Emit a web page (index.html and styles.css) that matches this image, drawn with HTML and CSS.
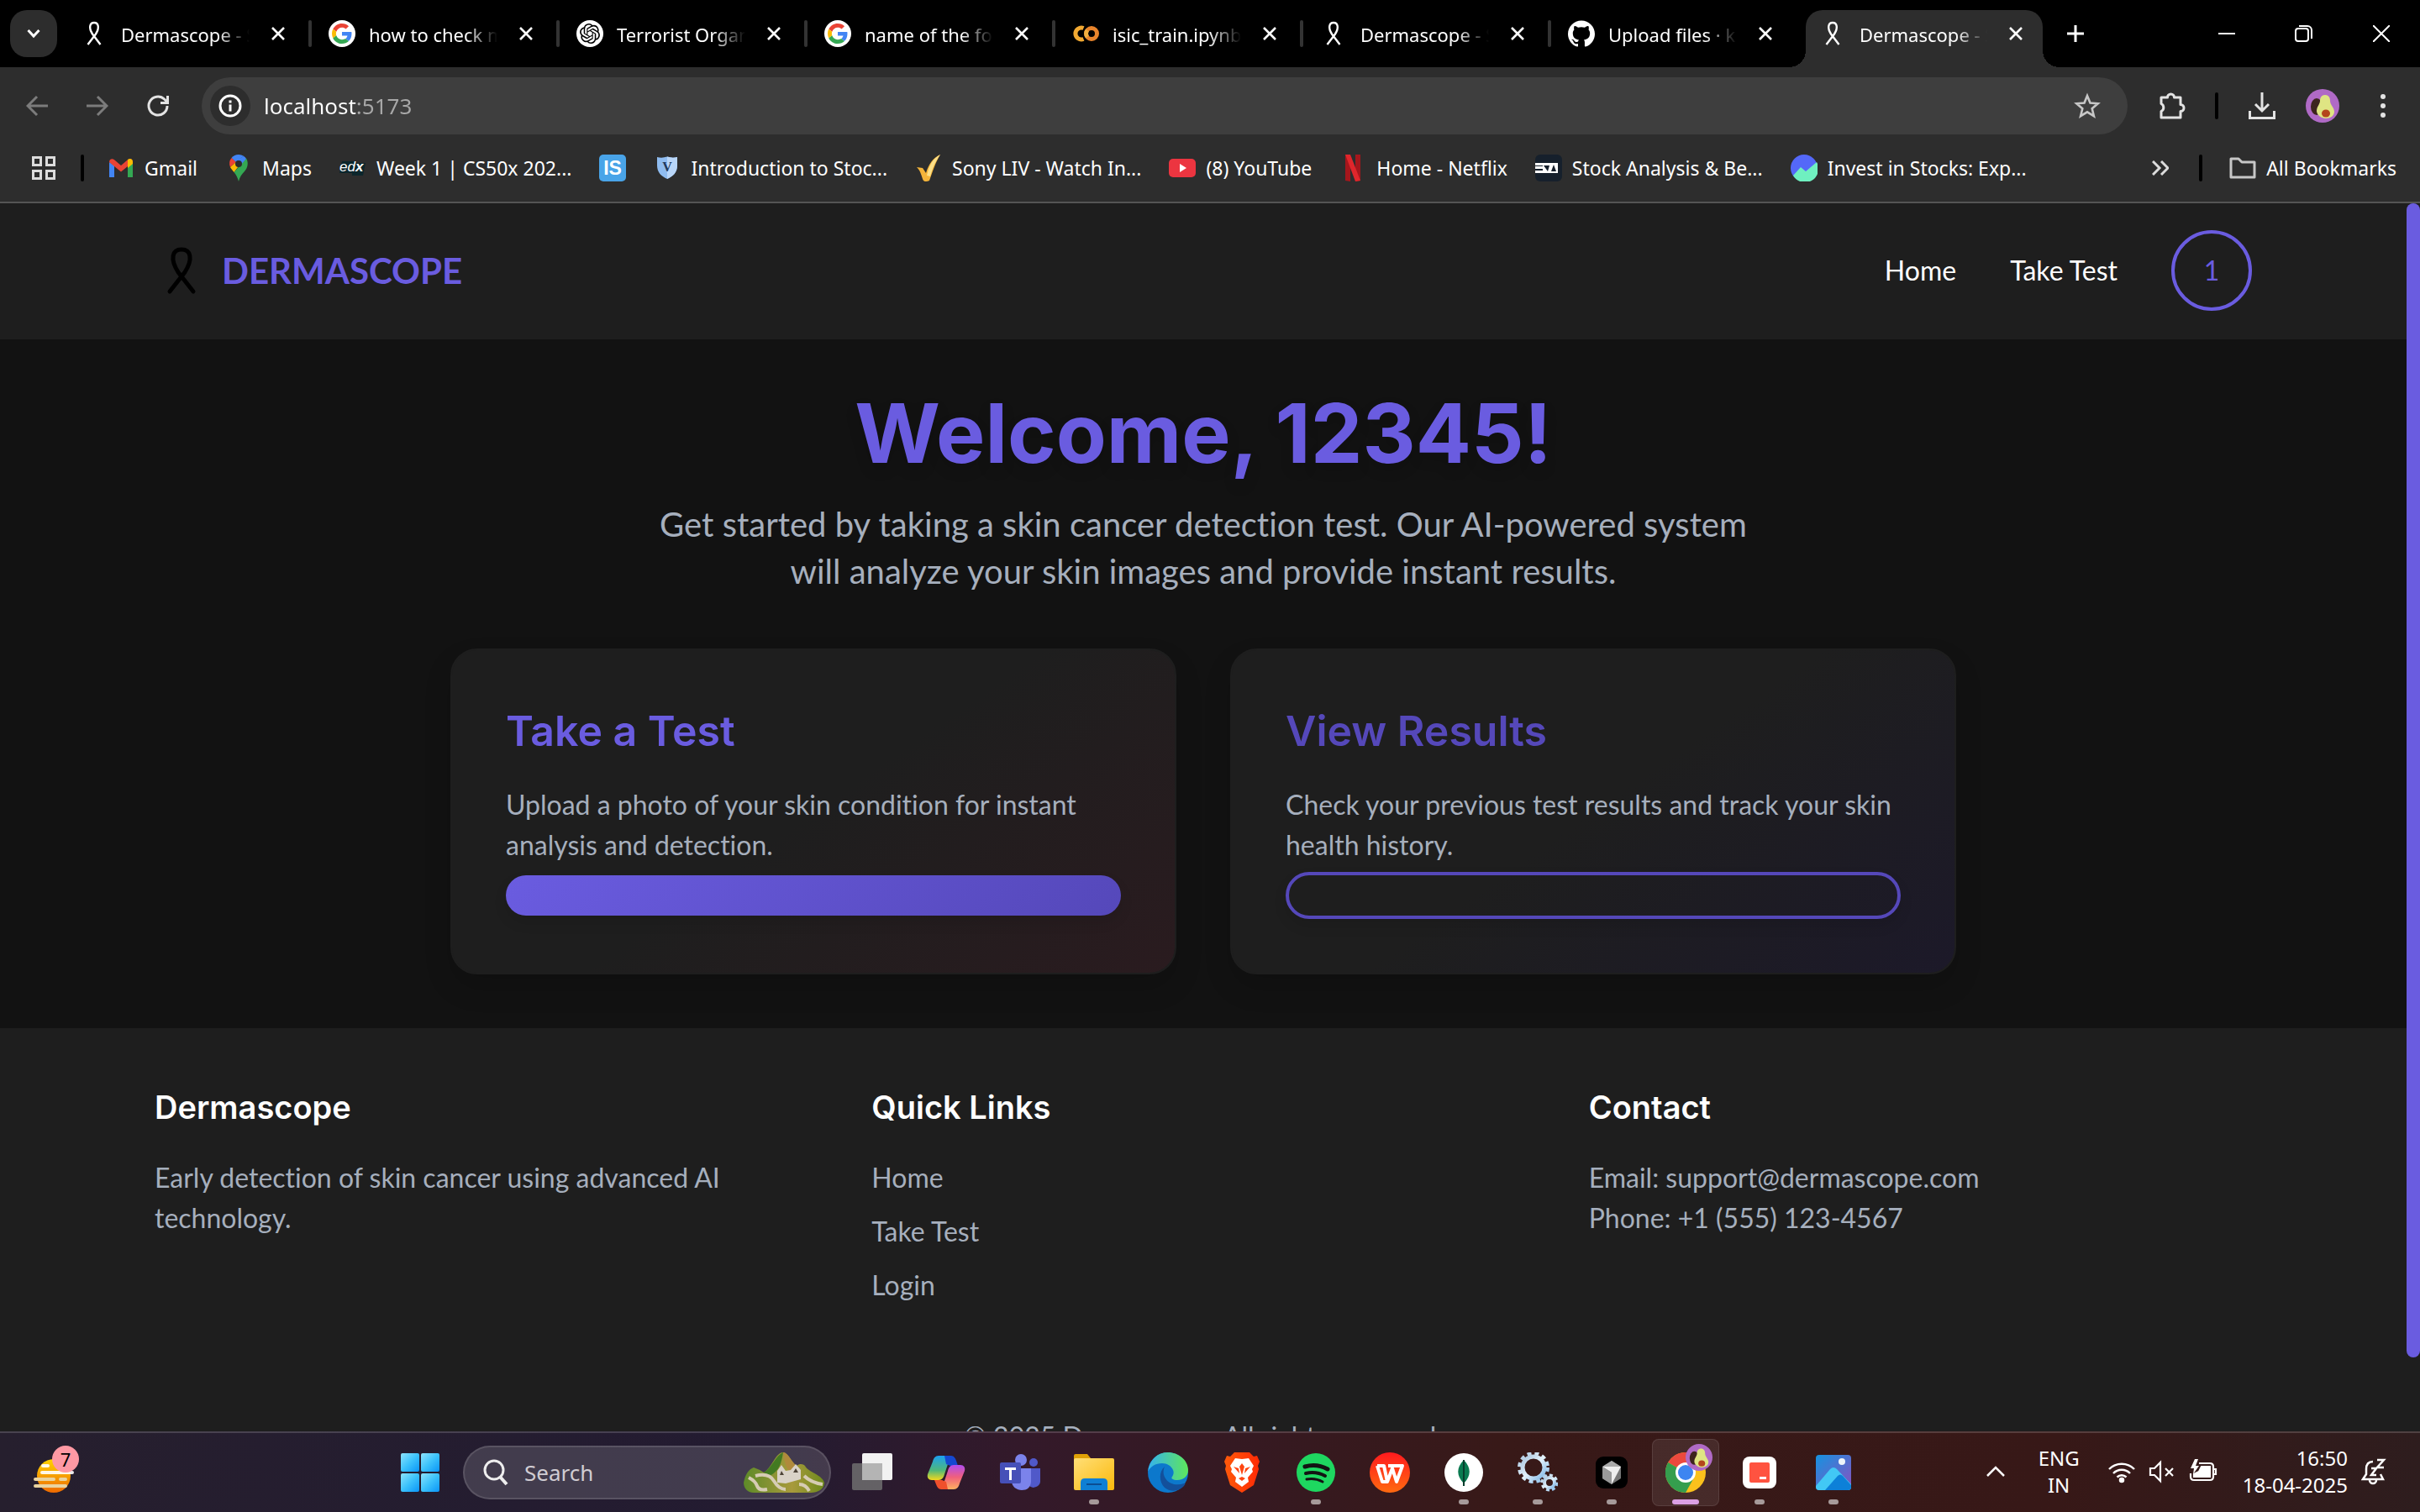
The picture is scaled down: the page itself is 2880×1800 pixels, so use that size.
FILE: index.html
```html
<!DOCTYPE html>
<html lang="en">
<head>
<meta charset="utf-8">
<title>Dermascope - Skin Cancer Detection</title>
<link rel="stylesheet" href="styles.css">
</head>
<body>
<svg class="defs" aria-hidden="true">
  <defs>
    <symbol id="ribbon" viewBox="0 0 28 32"><path d="M6.500 29 L16 16.500 C20.500 9.500 19.500 3 14 3 C8.500 3 7.500 9.500 12 16.500 L21.500 29" fill="none" stroke="currentColor" stroke-width="2.400"/></symbol>
    <symbol id="close" viewBox="0 0 16 16"><path d="M1 1 L15 15 M15 1 L1 15" fill="none" stroke="currentColor" stroke-width="2.600"/></symbol>
    <symbol id="google" viewBox="0 0 64 64"><circle cx="32" cy="32" r="32" fill="#fff"/><g transform="translate(8 8)"><path fill="#EA4335" d="M24 9.500c3.540 0 6.710 1.220 9.210 3.600l6.850-6.850C35.900 2.380 30.470 0 24 0 14.620 0 6.510 5.380 2.560 13.220l7.980 6.190C12.430 13.720 17.740 9.500 24 9.500z"/><path fill="#4285F4" d="M46.980 24.550c0-1.570-.15-3.090-.38-4.550H24v9.020h12.940c-.58 2.960-2.260 5.480-4.780 7.180l7.730 6c4.510-4.180 7.090-10.360 7.090-17.650z"/><path fill="#FBBC05" d="M10.530 28.590c-.48-1.450-.76-2.990-.76-4.590s.27-3.140.76-4.590l-7.980-6.190C.92 16.460 0 20.120 0 24c0 3.880.92 7.540 2.560 10.780l7.970-6.190z"/><path fill="#34A853" d="M24 48c6.480 0 11.930-2.130 15.890-5.810l-7.730-6c-2.150 1.450-4.920 2.300-8.160 2.300-6.260 0-11.570-4.220-13.470-9.910l-7.980 6.190C6.510 42.620 14.620 48 24 48z"/></g></symbol>
    <symbol id="avatar" viewBox="0 0 40 40"><circle cx="20" cy="20" r="20" fill="#b06ac6"/><ellipse cx="13" cy="21" rx="7" ry="10" fill="#3d241e"/><path d="M23 7c4 0 6 3 6 7 0 5 5 8 5 13 0 5-5 8-10 8s-11-4-11-9c0-5 4-8 4-12 0-4 2-7 6-7z" fill="#dfe583"/><ellipse cx="24" cy="29" rx="5" ry="4.500" fill="#b4461c"/></symbol>
    <linearGradient id="gWin" x1="0" y1="0" x2="1" y2="1"><stop offset="0" stop-color="#8de3fd"/><stop offset=".5" stop-color="#3cc2fb"/><stop offset="1" stop-color="#0a95f7"/></linearGradient>
    <linearGradient id="gSun" x1="0" y1="0" x2="0" y2="1"><stop offset="0" stop-color="#ffd400"/><stop offset="1" stop-color="#ee6a00"/></linearGradient>
    <linearGradient id="gCop1" x1="0" y1="0" x2="0" y2="1"><stop offset="0" stop-color="#1ca0f0"/><stop offset=".6" stop-color="#4fb87a"/><stop offset="1" stop-color="#f4d81c"/></linearGradient>
    <linearGradient id="gCop2" x1="0" y1="0" x2="0" y2="1"><stop offset="0" stop-color="#b04cf0"/><stop offset=".5" stop-color="#f0607c"/><stop offset="1" stop-color="#ffb060"/></linearGradient>
    <linearGradient id="gFold" x1="0" y1="0" x2="1" y2="1"><stop offset="0" stop-color="#ffdf77"/><stop offset="1" stop-color="#fbb90c"/></linearGradient>
    <linearGradient id="gEdge" x1="0" y1="0" x2="1" y2="0"><stop offset="0" stop-color="#35b2ee"/><stop offset="1" stop-color="#5ee65c"/></linearGradient>
    <linearGradient id="gBrave" x1="0" y1="0" x2="1" y2="0"><stop offset="0" stop-color="#ff5a0a"/><stop offset="1" stop-color="#ff2a05"/></linearGradient>
    <linearGradient id="gWps" x1="0" y1="0" x2="0" y2="1"><stop offset="0" stop-color="#ff1a1e"/><stop offset="1" stop-color="#ff6a10"/></linearGradient>
    <linearGradient id="gPho" x1="0" y1="0" x2="1" y2="1"><stop offset="0" stop-color="#1593e0"/><stop offset="1" stop-color="#8a50c0"/></linearGradient>
    <linearGradient id="gHill" x1="0" y1="0" x2="1" y2="0"><stop offset="0" stop-color="#5d8a28"/><stop offset=".6" stop-color="#a89a3c"/><stop offset="1" stop-color="#6d8a1c"/></linearGradient>
    <linearGradient id="gGear" x1="0" y1="0" x2="1" y2="1"><stop offset="0" stop-color="#a9c4de"/><stop offset=".5" stop-color="#e3f2fc"/><stop offset="1" stop-color="#7fb6e6"/></linearGradient>
  </defs>
</svg>

<header class="browser">
  <div class="tabstrip">
    <button class="tab-search" aria-label="Search tabs"><svg width="16" height="12" viewBox="0 0 16 12"><path d="M1.500 2 L8 9 L14.500 2" fill="none" stroke="#fff" stroke-width="3"/></svg></button>
    <div class="tabs">
      <div class="tab"><svg class="fav"><use href="#ribbon"/></svg><span class="tab-title">Dermascope - Skin</span><button class="tab-close" aria-label="Close tab"><svg><use href="#close"/></svg></button></div>
      <div class="tab"><svg class="fav"><use href="#google"/></svg><span class="tab-title">how to check my</span><button class="tab-close" aria-label="Close tab"><svg><use href="#close"/></svg></button></div>
      <div class="tab"><svg class="fav" viewBox="0 0 32 32"><circle cx="16" cy="16" r="16" fill="#fff"/><g transform="translate(4 4)"><path fill="#000" d="M22.282 9.821a5.985 5.985 0 0 0-.516-4.911 6.046 6.046 0 0 0-6.510-2.900A6.065 6.065 0 0 0 4.981 4.182a5.985 5.985 0 0 0-3.998 2.900 6.046 6.046 0 0 0 .743 7.097 5.980 5.980 0 0 0 .511 4.911 6.051 6.051 0 0 0 6.515 2.900A5.985 5.985 0 0 0 13.260 24a6.056 6.056 0 0 0 5.772-4.206 5.989 5.989 0 0 0 3.998-2.900 6.056 6.056 0 0 0-.748-7.073zm-9.022 12.608a4.476 4.476 0 0 1-2.876-1.041l.142-.080 4.778-2.758a.795.795 0 0 0 .393-.681v-6.737l2.020 1.169a.071.071 0 0 1 .038.052v5.583a4.504 4.504 0 0 1-4.495 4.494zm-9.661-4.125a4.471 4.471 0 0 1-.535-3.014l.142.085 4.783 2.758a.771.771 0 0 0 .781 0l5.843-3.369v2.332a.080.080 0 0 1-.033.062L9.740 19.950a4.499 4.499 0 0 1-6.141-1.646zM2.341 7.896a4.485 4.485 0 0 1 2.366-1.973V11.600a.766.766 0 0 0 .388.677l5.814 3.354-2.020 1.169a.076.076 0 0 1-.071 0l-4.830-2.787A4.504 4.504 0 0 1 2.341 7.872zm16.596 3.856L13.104 8.364 15.119 7.200a.076.076 0 0 1 .071 0l4.830 2.791a4.494 4.494 0 0 1-.677 8.104v-5.677a.790.790 0 0 0-.407-.667zm2.011-3.023l-.142-.085-4.774-2.782a.776.776 0 0 0-.785 0L9.409 9.230V6.897a.066.066 0 0 1 .028-.062l4.830-2.787a4.499 4.499 0 0 1 6.680 4.660zM8.307 12.863l-2.020-1.164a.080.080 0 0 1-.038-.057V6.074a4.499 4.499 0 0 1 7.376-3.454l-.142.081L8.704 5.459a.795.795 0 0 0-.393.681zm1.098-2.365l2.602-1.500 2.607 1.500v2.999l-2.597 1.500-2.607-1.500Z"/></g></svg><span class="tab-title">Terrorist Organis</span><button class="tab-close" aria-label="Close tab"><svg><use href="#close"/></svg></button></div>
      <div class="tab"><svg class="fav"><use href="#google"/></svg><span class="tab-title">name of the four</span><button class="tab-close" aria-label="Close tab"><svg><use href="#close"/></svg></button></div>
      <div class="tab"><svg class="fav" viewBox="0 0 32 32" fill="none" stroke-width="5"><path d="M13.500 9.500A7 7 0 1 0 13.500 22.500" stroke="#f2a932"/><circle cx="23" cy="16" r="6.500" stroke="#e8842c"/><path d="M18 12a6.500 6.500 0 0 0 0 8" stroke="#f2b040"/></svg><span class="tab-title">isic_train.ipynb -</span><button class="tab-close" aria-label="Close tab"><svg><use href="#close"/></svg></button></div>
      <div class="tab"><svg class="fav"><use href="#ribbon"/></svg><span class="tab-title">Dermascope - Skin</span><button class="tab-close" aria-label="Close tab"><svg><use href="#close"/></svg></button></div>
      <div class="tab before-active"><svg class="fav" viewBox="0 0 24 24"><path fill="#fff" d="M12 .297c-6.630 0-12 5.373-12 12 0 5.303 3.438 9.800 8.205 11.385.6.113.82-.258.82-.577 0-.285-.01-1.040-.015-2.040-3.338.724-4.042-1.610-4.042-1.610C4.422 18.070 3.633 17.700 3.633 17.700c-1.087-.744.084-.729.084-.729 1.205.084 1.838 1.236 1.838 1.236 1.070 1.835 2.809 1.305 3.495.998.108-.776.417-1.305.76-1.605-2.665-.3-5.466-1.332-5.466-5.930 0-1.310.465-2.380 1.235-3.220-.135-.303-.54-1.523.105-3.176 0 0 1.005-.322 3.300 1.230.96-.267 1.980-.399 3-.405 1.020.006 2.040.138 3 .405 2.280-1.552 3.285-1.230 3.285-1.230.645 1.653.24 2.873.12 3.176.765.84 1.230 1.910 1.230 3.220 0 4.610-2.805 5.625-5.475 5.920.42.36.81 1.096.81 2.220 0 1.606-.015 2.896-.015 3.286 0 .315.21.69.825.57C20.565 22.092 24 17.592 24 12.297c0-6.627-5.373-12-12-12"/></svg><span class="tab-title">Upload files · kr</span><button class="tab-close" aria-label="Close tab"><svg><use href="#close"/></svg></button></div>
      <div class="tab active"><svg class="fav"><use href="#ribbon"/></svg><span class="tab-title">Dermascope - Skin</span><button class="tab-close" aria-label="Close tab"><svg><use href="#close"/></svg></button></div>
      <button class="new-tab" aria-label="New tab"><svg width="22" height="22" viewBox="0 0 22 22"><path d="M11 1v20M1 11h20" stroke="#fff" stroke-width="3"/></svg></button>
    </div>
    <div class="window-controls">
      <button aria-label="Minimize"><svg width="20" height="20" viewBox="0 0 20 20"><path d="M0 10h20" stroke="#fff" stroke-width="2"/></svg></button>
      <button aria-label="Restore"><svg width="22" height="22" viewBox="0 0 22 22" fill="none" stroke="#fff" stroke-width="2"><rect x="1" y="5" width="15" height="15" rx="3"/><path d="M5 2h10a5 5 0 0 1 5 5v10"/></svg></button>
      <button aria-label="Close window"><svg width="20" height="20" viewBox="0 0 20 20"><path d="M0 0L20 20M20 0L0 20" stroke="#fff" stroke-width="2"/></svg></button>
    </div>
  </div>

  <div class="toolbar">
    <button class="tool" aria-label="Back"><svg width="26" height="26" viewBox="0 0 26 26" fill="none" stroke="#7c7c7c" stroke-width="3"><path d="M26 13H3M13 2L2 13l11 11"/></svg></button>
    <button class="tool" aria-label="Forward"><svg width="26" height="26" viewBox="0 0 26 26" fill="none" stroke="#7c7c7c" stroke-width="3"><path d="M0 13h23M13 2l11 11-11 11"/></svg></button>
    <button class="tool" aria-label="Reload"><svg width="28" height="28" viewBox="0 0 28 28" fill="none" stroke="#e3e3e3" stroke-width="3"><path d="M25 14a11 11 0 1 1-3.500-8L25 9.500M25.500 2v8.500H17"/></svg></button>
    <div class="omnibox">
      <button class="site-info" aria-label="View site information"><svg width="28" height="28" viewBox="0 0 28 28"><circle cx="14" cy="14" r="12" fill="none" stroke="#fff" stroke-width="3"/><path d="M14 12.500v8M14 7.500v3" stroke="#fff" stroke-width="3"/></svg></button>
      <input class="url" type="text" value="localhost:5173" aria-label="Address">
      <button class="tool" aria-label="Bookmark this tab"><svg width="32" height="32" viewBox="0 0 32 32"><path d="M16 4l3.500 8.500 9.200.7-7 6 2.200 9L16 23.300 8.100 28.200l2.200-9-7-6 9.200-.7z" fill="none" stroke="#c7c7c7" stroke-width="2.600"/></svg></button>
    </div>
    <button class="tool" aria-label="Extensions"><svg width="34" height="34" viewBox="0 0 34 34"><path d="M5 7h7.500a4 4 0 0 1 8 0H28v8.500a4 4 0 0 1 0 8V31H5v-7.500a5 5 0 0 0 0-9z" fill="none" stroke="#e3e3e3" stroke-width="3" stroke-linejoin="round"/></svg></button>
    <span class="divider"></span>
    <button class="tool" aria-label="Downloads"><svg width="32" height="32" viewBox="0 0 32 32" fill="none" stroke="#e3e3e3" stroke-width="3"><path d="M16 0v22M8 14l8 8 8-8M1.500 22v8.500h29V22"/></svg></button>
    <button class="tool" aria-label="Profile"><svg width="40" height="40"><use href="#avatar"/></svg></button>
    <button class="tool" aria-label="Browser menu"><svg width="8" height="28" viewBox="0 0 8 28" fill="#e3e3e3"><circle cx="4" cy="3" r="3"/><circle cx="4" cy="14" r="3"/><circle cx="4" cy="25" r="3"/></svg></button>
  </div>

  <nav class="bookmarks" aria-label="Bookmarks">
    <button class="apps" aria-label="Apps"><svg width="28" height="28" viewBox="0 0 28 28" fill="none" stroke="#dcdcdc" stroke-width="3"><rect x="1.500" y="1.500" width="9" height="9"/><rect x="17.500" y="1.500" width="9" height="9"/><rect x="1.500" y="17.500" width="9" height="9"/><rect x="17.500" y="17.500" width="9" height="9"/></svg></button>
    <span class="divider"></span>
    <a class="bm" href="#"><svg width="32" height="32" viewBox="0 0 32 32"><path d="M2 27V9l6 4v14z" fill="#4285f4"/><path d="M24 27V13l6-4v18z" fill="#34a853"/><path d="M2 9c0-4 4-5 7-2l7 6 7-6c3-3 7-2 7 2l-6 5-8 6.500L8 14z" fill="#ea4335"/><path d="M24 6c3-2 6-1 6 3v2l-6 5z" fill="#fbbc04"/></svg>Gmail</a>
    <a class="bm" href="#"><svg width="32" height="32" viewBox="0 0 32 32"><path d="M16 0a11 11 0 0 0-8.500 4l5 5L22 1.800A11 11 0 0 0 16 0z" fill="#4285f4"/><path d="M7.500 4A11 11 0 0 0 6 15l7-6z" fill="#ea4335"/><path d="M6 15c1 2 3 4 4.500 6L24 3.500 13 9z" fill="#fbbc04"/><path d="M10.500 21c3 4 4.500 7 5.500 11 1-5 4-9 7-12 4-4 5-11 2-15.500z" fill="#34a853"/><path d="M22 1.800A11 11 0 0 1 25 5l-6 7-5-5z" fill="#4285f4"/><circle cx="16" cy="11" r="4" fill="#2d2d2d"/></svg>Maps</a>
    <a class="bm" href="#"><svg width="32" height="32" viewBox="0 0 32 32"><path d="M3 8h16v2h12l-3 15H15v-3H0z" fill="#0c262c"/><text x="0" y="20" class="logo-edx" fill="#fff">ed<tspan font-weight="bold">x</tspan></text></svg>Week 1 | CS50x 202...</a>
    <a class="bm" href="#" aria-label="IS"><svg width="32" height="32" viewBox="0 0 32 32"><rect width="32" height="32" rx="5" fill="#49a4e8"/><text x="16" y="24" text-anchor="middle" class="logo-is" fill="#fff">IS</text></svg></a>
    <a class="bm" href="#"><svg width="32" height="32" viewBox="0 0 32 32"><path d="M4 3q6 1.500 12-.500 6 2 12 .500v10c0 8-5 13-12 16C9 26 4 21 4 13z" fill="#8fbcf0"/><path d="M16 2.500q6 2 12 .500v10c0 8-5 13-12 16z" fill="#b9d6f8"/><text x="16" y="20" text-anchor="middle" class="logo-v" fill="#20385c">V</text></svg>Introduction to Stoc...</a>
    <a class="bm" href="#"><svg width="32" height="32" viewBox="0 0 32 32"><path d="M2 15l7 1 4 6C16 12 21 4 30 0c-6 10-9 20-13 31-5 2-7 1-8-2-2-6-3-10-7-14z" fill="#f4b43a"/><path d="M14 25C17 12 21 5 30 0c-7 10-9 16-12 26z" fill="#fbe08a"/></svg>Sony LIV - Watch In...</a>
    <a class="bm" href="#"><svg width="32" height="32" viewBox="0 0 32 32"><rect y="5" width="32" height="22" rx="5" fill="#ec3540"/><path d="M13 11l8 5-8 5z" fill="#fff"/></svg>(8) YouTube</a>
    <a class="bm" href="#"><svg width="32" height="32" viewBox="0 0 32 32"><path d="M7 0h6v32l-6-1zM19 0h6v31l-6 1z" fill="#a5161c"/><path d="M7 0h6l12 31-6 1z" fill="#e0262c"/></svg>Home - Netflix</a>
    <a class="bm" href="#"><svg width="32" height="32" viewBox="0 0 32 32"><rect width="32" height="32" rx="6" fill="#16202c"/><path d="M0 10h27v12H0v-3h9v-2H0v-3h9v-1H0z" fill="#fff"/><path d="M10 13h7l-2 7zM22 12l3 8h-6z" fill="#16202c"/></svg>Stock Analysis &amp; Be...</a>
    <a class="bm" href="#"><svg width="32" height="32" viewBox="0 0 32 32"><circle cx="16" cy="16" r="16" fill="#5468f8"/><path d="M3 25l9-10 6 5 13-11a16 16 0 0 1-28 16z" fill="#6ff0c0"/></svg>Invest in Stocks: Exp...</a>
    <button class="more" aria-label="More bookmarks"><svg width="20" height="18" viewBox="0 0 20 18" fill="none" stroke="#dcdcdc" stroke-width="3"><path d="M1 1l8 8-8 8M11 1l8 8-8 8"/></svg></button>
    <span class="divider"></span>
    <a class="bm all" href="#"><svg width="32" height="32" viewBox="0 0 32 32"><path d="M2 5h9l4 4h15v18H2z" fill="none" stroke="#c7c7c7" stroke-width="3" stroke-linejoin="round"/></svg>All Bookmarks</a>
  </nav>
</header>

<div class="viewport">
  <div class="page">
    <nav class="site-nav" aria-label="Main">
      <a class="brand" href="#"><svg width="64" height="64" viewBox="0 0 64 64"><path d="M18 57L36 34C46 18 43 7 32 7S18 18 28 34L46 57" fill="none" stroke="#000" stroke-width="5" stroke-linecap="round"/></svg>DERMASCOPE</a>
      <div class="site-links"><a href="#">Home</a><a href="#">Take Test</a><button class="user">1</button></div>
    </nav>

    <main class="hero">
      <h1>Welcome, 12345!</h1>
      <p class="lead">Get started by taking a skin cancer detection test. Our AI-powered system<br>will analyze your skin images and provide instant results.</p>
      <div class="cards">
        <section class="card card-test">
          <h2>Take a Test</h2>
          <p>Upload a photo of your skin condition for instant<br>analysis and detection.</p>
          <div class="action"><a class="bar solid" href="#" aria-label="Take a test"></a></div>
        </section>
        <section class="card card-results">
          <h2>View Results</h2>
          <p>Check your previous test results and track your skin<br>health history.</p>
          <div class="action"><a class="bar outline" href="#" aria-label="View results"></a></div>
        </section>
      </div>
    </main>

    <footer class="site-footer">
      <div class="footer-cols">
        <section><h3>Dermascope</h3><p>Early detection of skin cancer using advanced AI<br>technology.</p></section>
        <section><h3>Quick Links</h3><ul><li><a href="#">Home</a></li><li><a href="#">Take Test</a></li><li><a href="#">Login</a></li></ul></section>
        <section><h3>Contact</h3><p>Email: support@dermascope.com<br>Phone: +1 (555) 123-4567</p></section>
      </div>
      <p class="copyright">© 2025 Dermascope. All rights reserved.</p>
    </footer>
  </div>
  <div class="scroll-track"><div class="scroll-thumb"></div></div>
</div>

<footer class="taskbar">
  <button class="weather" aria-label="Widgets"><svg width="64" height="64" viewBox="0 0 64 64"><circle cx="24" cy="36" r="20" fill="url(#gSun)"/><g fill="#fff" fill-opacity=".9"><rect x="9" y="22" width="10" height="4" rx="2"/><rect x="8" y="30" width="40" height="4" rx="2"/></g><g fill="#e9d3a0"><rect x="0" y="38" width="26" height="4" rx="2"/><rect x="30" y="38" width="10" height="4" rx="2"/><rect x="0" y="46" width="40" height="4" rx="2"/></g></svg><span class="badge">7</span></button>
  <div class="dock">
    <button class="app" aria-label="Start"><svg width="48" height="48" viewBox="0 0 48 48" fill="url(#gWin)"><rect x="1" y="1" width="22" height="22" rx="2"/><rect x="25" y="1" width="22" height="22" rx="2"/><rect x="1" y="25" width="22" height="22" rx="2"/><rect x="25" y="25" width="22" height="22" rx="2"/></svg></button>
    <label class="search">
      <svg width="32" height="32" viewBox="0 0 32 32" fill="none" stroke="#eee"><circle cx="14" cy="13" r="11" stroke-width="3"/><path d="M21 21l8 9" stroke-width="4"/></svg>
      <input type="text" placeholder="Search" aria-label="Search">
      <svg width="96" height="48" viewBox="0 0 96 48"><path d="M0 36C2 26 6 20 12 18q6 2 12 6C34 18 38 0 47 0c6 0 10 12 16 16 4-3 8-2 10 0 4 8 20 10 23 20 0 8-8 12-16 12H12C4 48 0 42 0 36z" fill="url(#gHill)"/><path d="M47 0c6 0 10 12 16 16l-6 10C50 18 48 10 47 0z" fill="#b08a3c"/><path d="M24 24C34 18 38 4 47 0c-2 12-4 22-16 28z" fill="#437a22"/><path d="M6 30q8 4 10 10t12 4M14 28q16-4 22 6t14 10M66 38q8 0 12 8M72 28q8 8 22 10" fill="none" stroke="#d6ccb4" stroke-width="4"/><path d="M40 36V22l5-7 5 7 6-1 6-7 6 7v11l-18 5z" fill="#d9d2c8"/><path d="M43 27l2-5 3 5zM59 24l3-5 3 5z" fill="#4d4338"/></svg>
    </label>
    <button class="app" aria-label="Task view"><svg width="48" height="48" viewBox="0 0 48 48"><rect x="12" y="1" width="36" height="32" rx="2" fill="#f2f2f2"/><rect y="13" width="36" height="32" rx="2" fill="#6f6f6f" fill-opacity=".85"/><rect x="12" y="13" width="24" height="20" fill="#b4b4b4"/></svg></button>
    <button class="app" aria-label="Copilot"><svg width="48" height="48" viewBox="0 0 48 48"><path d="M27 4H15c-4 0-6 3-7 7L2 26c-1 4 1 7 5 7h8c4 0 6-3 7-7l5-15c1-3 2-4 5-4-1-2-3-3-5-3z" fill="url(#gCop1)"/><path d="M22 4h8c3 0 5 3 6 6l2 6h-9l-5-2z" fill="#1548d0"/><path d="M21 44h12c4 0 6-3 7-7l6-15c1-4-1-7-5-7h-8c-4 0-6 3-7 7l-5 15c-1 3-2 4-5 4 1 2 3 3 5 3z" fill="url(#gCop2)"/><path d="M26 44h-8c-3 0-5-3-6-6l-2-5h9l5 2z" fill="#f0502c"/></svg></button>
    <button class="app" aria-label="Teams"><svg width="48" height="48" viewBox="0 0 48 48"><circle cx="40" cy="12" r="5" fill="#5059c9"/><path d="M34 19h14v14a8 8 0 0 1-14 6z" fill="#5059c9"/><circle cx="25" cy="9" r="7" fill="#7b83eb"/><path d="M14 19h23v15c0 8-5 11-11 11s-12-4-12-11z" fill="#7b83eb"/><rect y="12" width="25" height="25" rx="2" fill="#4650b8"/><path d="M6 18h13v3h-5v12h-3V21H6z" fill="#fff"/></svg></button>
    <button class="app running" aria-label="File Explorer"><svg width="48" height="48" viewBox="0 0 48 48"><path d="M0 4q0-2 2-2h14l4 5v10H0z" fill="#e0a106"/><rect y="7" width="48" height="38" rx="2" fill="url(#gFold)"/><path d="M8 45V36q0-5 5-5h22q5 0 5 5v9z" fill="#0f7fd4"/><path d="M15 38h18" stroke="#0b4d92" stroke-width="2"/></svg></button>
    <button class="app" aria-label="Edge"><svg width="48" height="48" viewBox="0 0 48 48"><circle cx="24" cy="24" r="24" fill="#0c78cc"/><path d="M0 23C2 8 12 0 24 0s24 9 24 21c0 8-6 12-13 12-5 0-8-2-6-4 2-3 2-6 1-8-2-5-7-8-13-8C9 13 3 17 0 23z" fill="url(#gEdge)"/><path d="M20 17c-7 6-7 18 0 25 6 5 16 5 22-1 3-3 3-4 1-4-8 3-18 1-22-6-3-5-3-9-1-14z" fill="#13509b"/></svg></button>
    <button class="app" aria-label="Brave"><svg width="48" height="48" viewBox="0 0 48 48"><path d="M15 0h18l5 5 4-1 3 7-2 5 1 4-6 19-14 9-14-9-6-19 1-4-2-5 3-7 4 1z" fill="url(#gBrave)"/><path d="M24 8l8-1 6 9-2 4 1 3-6 7 1 5-8 6-8-6 1-5-6-7 1-3-2-4 6-9z" fill="#fff"/><path d="M14 17l6 2 1 6zM34 17l-6 2-1 6zM20 31l4 3 4-3-4-2zM24 13l3 4-3 10-3-10z" fill="#ff4510"/></svg></button>
    <button class="app running" aria-label="Spotify"><svg width="48" height="48" viewBox="0 0 48 48"><circle cx="24" cy="24" r="23" fill="#1ed760"/><g fill="none" stroke="#131313" stroke-linecap="round"><path d="M11 17q14-4 27 3" stroke-width="5"/><path d="M12 25q12-3 23 3" stroke-width="4"/><path d="M13 32q10-2 19 3" stroke-width="3"/></g></svg></button>
    <button class="app" aria-label="WPS Office"><svg width="48" height="48" viewBox="0 0 48 48"><circle cx="24" cy="24" r="24" fill="url(#gWps)"/><path d="M9 16h8l4 19 6-16 5 16 7-19H22" fill="none" stroke="#fff" stroke-width="4" stroke-linejoin="round"/><path d="M9 16l6 19h6" fill="none" stroke="#fff" stroke-width="4" stroke-linejoin="round"/></svg></button>
    <button class="app running" aria-label="MongoDB Compass"><svg width="48" height="48" viewBox="0 0 48 48"><circle cx="24" cy="24" r="23" fill="#fff"/><path d="M24 9c9 9 9 19 0 28-9-9-9-19 0-28z" fill="#0a7a50"/><path d="M24 9v31" stroke="#073d2c" stroke-width="2"/></svg></button>
    <button class="app running" aria-label="Services"><svg width="48" height="48" viewBox="0 0 48 48" fill="none"><g stroke="url(#gGear)"><circle cx="19" cy="18" r="13" stroke-width="5"/><circle cx="19" cy="18" r="17" stroke-width="4" stroke-dasharray="5 4"/><circle cx="38" cy="36" r="6" stroke-width="4"/><circle cx="38" cy="36" r="9" stroke-width="3" stroke-dasharray="4 3"/></g></svg></button>
    <button class="app running" aria-label="Cursor"><svg width="48" height="48" viewBox="0 0 48 48"><rect x="5" y="5" width="38" height="38" rx="9" fill="#000"/><path d="M24 10l11 7v14l-11 7-11-7V17z" fill="#777"/><path d="M24 10l11 7-11 2-11-2z" fill="#aaa"/><path d="M13 17h22L24 38V24z" fill="#eee"/><path d="M13 17l11 7v14l-11-7z" fill="#999"/></svg></button>
    <button class="app running current" aria-label="Chrome"><svg width="48" height="48" viewBox="0 0 48 48"><circle cx="24" cy="24" r="24" fill="#fbbc09"/><path d="M24 24L3.200 12A24 24 0 0 1 44.800 12z" fill="#ea3a2e"/><path d="M24 24L3.200 12A24 24 0 0 0 24 48l10-18z" fill="#24963f"/><circle cx="24" cy="24" r="12" fill="#fff"/><circle cx="24" cy="24" r="9" fill="#2d7bf0"/></svg><svg class="profile-badge" width="32" height="32"><use href="#avatar"/></svg></button>
    <button class="app running" aria-label="Recorder"><svg width="48" height="48" viewBox="0 0 48 48"><rect x="4" y="5" width="40" height="38" rx="8" fill="#fff"/><rect x="12" y="12" width="24" height="24" rx="2" fill="#ff5340"/><rect x="24" y="29" width="8" height="3" fill="#fff"/></svg></button>
    <button class="app running" aria-label="Photos"><svg width="48" height="48" viewBox="0 0 48 48"><rect x="3" y="3" width="42" height="42" rx="4" fill="url(#gPho)"/><circle cx="34" cy="11" r="4" fill="#eef4fa"/><path d="M3 40L20 20q4-4 8 0l17 18v3q0 4-4 4H7q-4 0-4-4z" fill="#42c8f5"/><path d="M14 45l15-17q3-3 6 0l10 11v2q0 4-4 4z" fill="#0d80d8"/></svg></button>
  </div>
  <div class="tray">
    <button aria-label="Show hidden icons"><svg width="22" height="14" viewBox="0 0 22 14"><path d="M1 12L11 2l10 10" fill="none" stroke="#fff" stroke-width="2.500"/></svg></button>
    <button class="lang">ENG<br>IN</button>
    <button class="status" aria-label="Network, volume and battery">
      <svg width="32" height="32" viewBox="0 0 32 32" fill="none" stroke="#fff" stroke-width="2.500"><path d="M1 13a21 21 0 0 1 30 0M6 18a14 14 0 0 1 20 0M10.500 22.500a8 8 0 0 1 11 0"/><circle cx="16" cy="26" r="2" fill="#fff"/></svg>
      <svg width="32" height="32" viewBox="0 0 32 32" fill="none" stroke="#fff" stroke-width="2.200"><path d="M2 12h5l7-7v22l-7-7H2zM20 12l9 9M29 12l-9 9"/></svg>
      <svg width="34" height="32" viewBox="0 0 34 32" fill="none" stroke="#fff" stroke-width="2.200"><path d="M12 6h13q4 0 4 4v12q0 4-4 4H6q-4 0-4-4v-4M30 13h2v6h-2"/><path d="M15 10h10v12H6v-3l6-3z" fill="#fff"/><path d="M7 1L2 12h4l-1 7 7-10H8l3-8z" fill="#fff" stroke="none"/></svg>
    </button>
    <button class="clock">16:50<br>18-04-2025</button>
    <button aria-label="Notifications"><svg width="30" height="32" viewBox="0 0 30 32" fill="none" stroke="#fff" stroke-width="2.500"><path d="M14 4C8 4 6 8 6 13v6l-4 6h24l-3-6M10 26a4 4 0 0 0 8 0M19 2h8l-8 9h8M12 12h6l-6 8h6"/></svg></button>
  </div>
</footer>
</body>
</html>
```
FILE: styles.css
```css
* { box-sizing: border-box; margin: 0; padding: 0; }

:root {
  --purple: #6a5ce0;
  --purple-dark: #5548ba;
  --surface: #1e1e1e;
  --muted: #a6afbd;
  --chrome: #2d2d2d;
  --ui: "Noto Sans", "Open Sans", sans-serif;
  --body: Lato, "Liberation Sans", sans-serif;
  --display: Inter, "Liberation Sans", sans-serif;
}

body {
  display: flex;
  flex-direction: column;
  height: 100vh;
  overflow: hidden;
  background: #121212;
  color: #fff;
  font: 22px/32px var(--ui);
}

button { background: none; border: 0; color: inherit; font: inherit; }
input { background: none; border: 0; outline: 0; color: inherit; font: inherit; min-width: 0; }
a { color: inherit; text-decoration: none; }
ul { list-style: none; }
svg { display: block; flex: none; }
.defs { position: absolute; width: 0; height: 0; }

/* Browser frame */
.browser { flex: none; background: var(--chrome); border-bottom: 2px solid #555; }
.tabstrip { display: flex; height: 80px; background: #000; padding-left: 12px; }
.tab-search {
  display: grid; place-items: center;
  width: 56px; height: 56px; margin-top: 12px;
  border-radius: 20px; background: var(--chrome);
}
.tabs { display: flex; flex: 1; min-width: 0; padding-left: 8px; }
.tab {
  position: relative;
  display: flex; align-items: center;
  flex: 0 1 295px; min-width: 0;
  height: 64px; margin-top: 12px; padding: 0 32px 8px 20px;
}
.tab::after {
  content: ""; position: absolute; right: 0; top: 12px;
  width: 4px; height: 32px; border-radius: 2px; background: #333;
}
.before-active::after, .active::after { display: none; }
.fav { width: 32px; height: 32px; }
.tab-title {
  flex: 1; min-width: 0; margin: 2px 26px 0 16px;
  overflow: hidden; white-space: nowrap;
  -webkit-mask-image: linear-gradient(to right, #000 75%, transparent);
  mask-image: linear-gradient(to right, #000 75%, transparent);
}
.tab-close svg { width: 16px; height: 16px; }
.tab.active {
  flex-basis: 282px; height: 68px; margin-left: 8px; padding: 0 24px 12px 16px;
  border-radius: 20px 20px 0 0; background: var(--chrome);
}
.tab.active::before {
  content: ""; position: absolute; left: -20px; right: -20px; bottom: 0; height: 20px;
  background:
    radial-gradient(circle at 0 0, transparent 20px, var(--chrome) 20px) left / 20px 20px no-repeat,
    radial-gradient(circle at 100% 0, transparent 20px, var(--chrome) 20px) right / 20px 20px no-repeat;
}
.new-tab { padding: 0 28px; }
.window-controls { display: flex; }
.window-controls button { display: grid; place-items: center; width: 92px; }

.toolbar { display: flex; align-items: center; padding: 12px 8px 0; background: var(--chrome); }
.tool { display: grid; place-items: center; width: 72px; height: 68px; }
.omnibox {
  display: flex; align-items: center; flex: 1;
  height: 68px; margin: 0 16px; padding: 0 12px 0 10px;
  border-radius: 34px; background: #3e3e3e;
}
.toolbar .divider { margin: 0 16px; }
.site-info { display: grid; place-items: center; width: 48px; height: 48px; border-radius: 50%; background: var(--chrome); }
.url {
  flex: 1; height: 48px; margin-left: 16px; font-size: 26px;
  background: linear-gradient(to right, #fff 111px, #a8a8a8 111px);
  -webkit-background-clip: text; background-clip: text; color: transparent;
}
.divider { flex: none; width: 4px; height: 32px; border-radius: 2px; background: #000; }

.bookmarks { display: flex; align-items: center; height: 80px; padding: 0 28px 0 38px; font-size: 23px; }
.apps { margin-right: 30px; }
.bm { display: flex; align-items: center; gap: 12px; flex: none; white-space: nowrap; margin-left: 33px; }
.divider + .bm { margin-left: 28px; }
.more { margin: 0 36px 0 auto; }
.bookmarks .all { margin-left: 32px; }
.logo-edx { font: italic 17px "Liberation Sans", sans-serif; }
.logo-is { font: bold 23px "Liberation Sans", sans-serif; }
.logo-v { font: bold 16px "Liberation Serif", serif; }

/* Web page */
.viewport { display: flex; flex: 1; min-height: 0; }
.page { flex: 1; overflow: hidden; font-family: var(--body); font-variant-ligatures: none; }
.scroll-track { flex: none; width: 16px; background: var(--surface); }
.scroll-thumb { height: 94%; border-radius: 8px; background: var(--purple); }

.site-nav {
  display: flex; align-items: center; justify-content: space-between;
  padding: 32px 184px; border-bottom: 2px solid #1e1e1e; background: var(--surface);
}
.brand { display: flex; align-items: center; gap: 16px; color: var(--purple); font: bold 42px/64px var(--body); }
.site-links { display: flex; align-items: center; gap: 64px; font-size: 32px; }
.user { width: 96px; height: 96px; border: 4px solid var(--purple); border-radius: 50%; color: var(--purple); }

.hero { display: flex; flex-direction: column; align-items: center; padding: 56px 184px 64px; }
.hero h1 { font: bold 98px/112px var(--display); color: var(--purple); text-shadow: 0 8px 16px rgba(0, 0, 0, .15); margin-bottom: 24px; }
.lead { font-size: 40px; line-height: 56px; color: var(--muted); text-align: center; margin-bottom: 64px; }
.cards { display: grid; grid-template-columns: 1fr 1fr; gap: 64px; width: 100%; max-width: 1792px; }
.card {
  padding: 64px; border: 2px solid #1e1e1e; border-radius: 32px;
  box-shadow: 0 16px 32px rgba(0, 0, 0, .15);
}
.card-test { background: linear-gradient(145deg, #1e1e1e 50%, #2a1b1f) padding-box, #1e1e1e; }
.card-results { background: linear-gradient(145deg, #1e1e1e 50%, #1c1929) padding-box, #1e1e1e; }
.card h2 { font: 600 50px/64px var(--display); color: var(--purple); margin-bottom: 32px; }
.card-results h2 { color: var(--purple-dark); }
.card p { font-size: 32px; line-height: 48px; color: var(--muted); }
.action { display: flex; align-items: center; height: 56px; margin-top: 8px; }
.bar { flex: 1; height: 48px; border-radius: 28px; box-shadow: 0 8px 16px rgba(0, 0, 0, .1); }
.solid { background: linear-gradient(135deg, var(--purple), var(--purple-dark)); }
.outline { height: 56px; border: 4px solid var(--purple-dark); }

.site-footer { padding: 64px 184px; background: var(--surface); color: var(--muted); font-size: 32px; line-height: 48px; }
.footer-cols { display: grid; grid-template-columns: repeat(3, 1fr); gap: 64px; }
.site-footer h3 { font: 600 38px/60px var(--display); color: #fff; margin-bottom: 30px; }
.site-footer li { margin-bottom: 16px; }
.copyright { margin-top: 68px; padding-top: 48px; text-align: center; }

/* Taskbar */
.taskbar {
  display: flex; align-items: center; flex: none; height: 96px; padding: 0 24px 0 40px;
  border-top: 2px solid rgba(255, 255, 255, .16);
  background: linear-gradient(to right, #261f2e, #231b31 32%, #33192a 42%, #381918 62%, #371817 85%, #2e1d1e);
  background-origin: border-box;
}
.weather { position: relative; }
.badge {
  position: absolute; right: 10px; top: 0;
  width: 32px; height: 32px; border-radius: 50%;
  background: #ff99a4; color: #000; font-size: 22px; line-height: 32px; text-align: center;
}
.dock { display: flex; align-items: center; margin-left: 352px; }
.app { position: relative; display: grid; place-items: center; width: 88px; height: 80px; }
.running::after {
  content: ""; position: absolute; left: 38px; bottom: 2px;
  width: 12px; height: 6px; border-radius: 3px; background: #a69a9a;
}
.current::before {
  content: ""; position: absolute; inset: 0 4px; border-radius: 8px;
  background: rgba(255, 255, 255, .08); border: 1px solid rgba(255, 255, 255, .1);
}
.current::after { left: 28px; width: 32px; background: #dba0e4; }
.profile-badge { position: absolute; right: 12px; top: 6px; }
.search {
  display: flex; align-items: center; width: 438px; height: 64px; margin: 0 5px 0 7px; padding: 0 6px 0 21px;
  border: 2px solid rgba(255, 255, 255, .12); border-radius: 32px; background: rgba(255, 255, 255, .14);
}
.search input { flex: 1; margin-left: 18px; font-size: 26px; }
.search input::placeholder { color: #d0ccd2; opacity: 1; }
.tray { display: flex; align-items: center; margin-left: auto; padding-bottom: 2px; line-height: 32px; }
.lang { margin: 0 34px 0 40px; font-size: 24px; }
.status { display: flex; gap: 16px; }
.clock { margin: 0 16px 0 30px; text-align: right; font-size: 24px; }
.tray > button:last-child { margin-right: 16px; }
```
